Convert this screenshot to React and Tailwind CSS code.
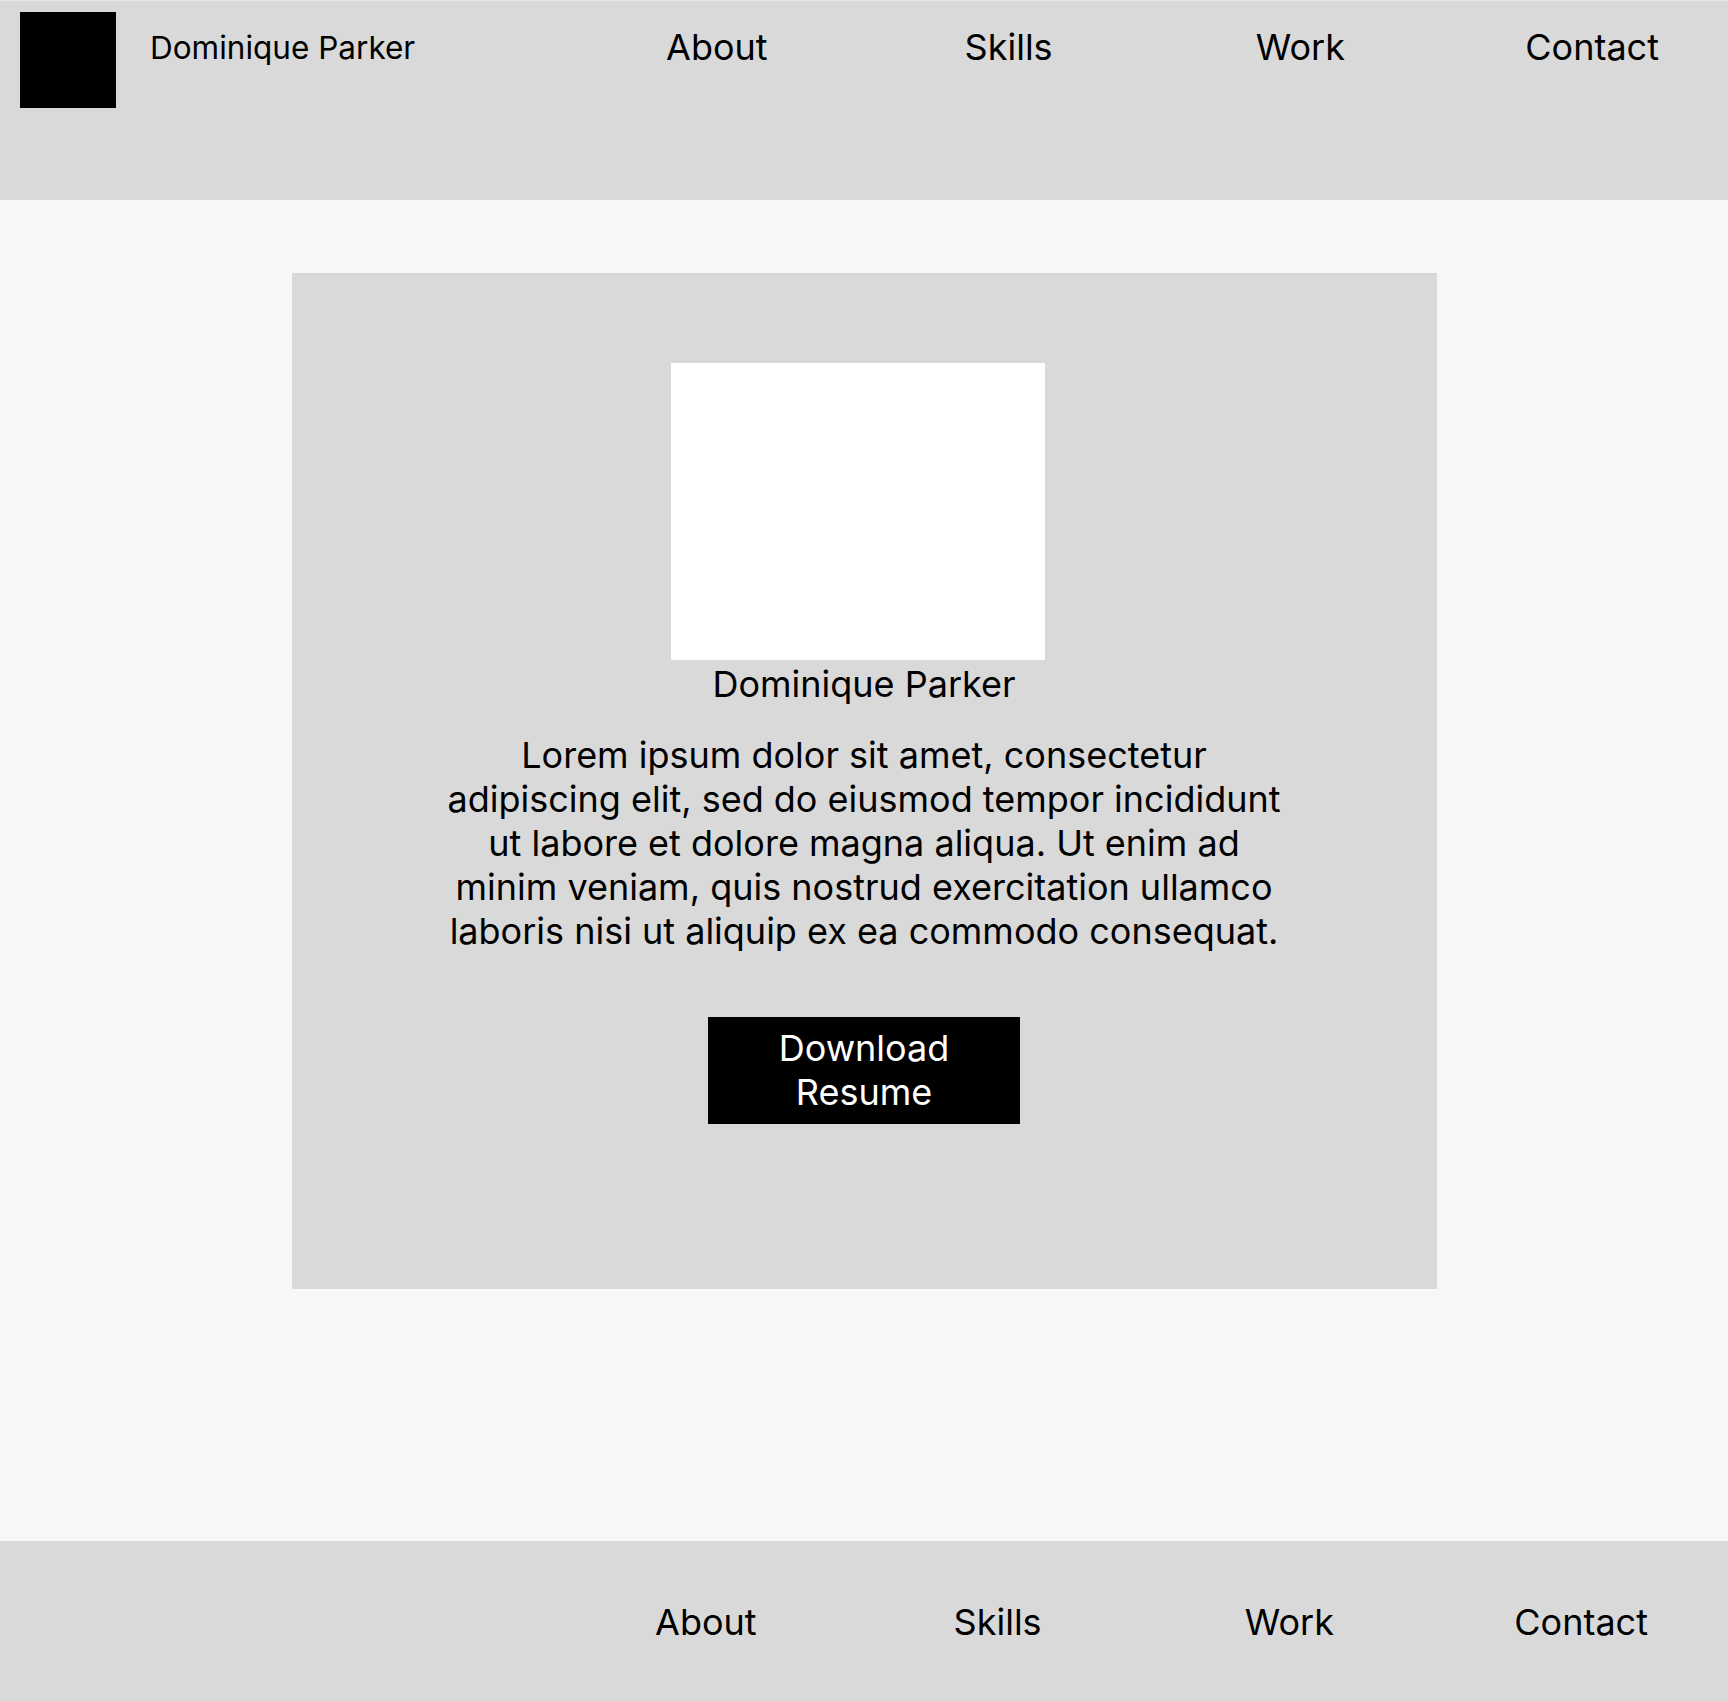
import React from 'react'

const links = ['About', 'Skills', 'Work', 'Contact']

const NavLinks = ({ className }) => (
  <nav className={`grid grid-cols-4 w-[1167px] shrink-0 ${className}`}>
    {links.map((l) => (
      <a key={l} href={`#${l.toLowerCase()}`} className="text-center text-[36px] leading-[1.21] text-black">
        {l}
      </a>
    ))}
  </nav>
)

const App = () => {
  return (
    <div className="min-h-[1701px] bg-[#f8f7f8] text-black" style={{ fontFamily: 'Inter, "Noto Sans", sans-serif' }}>
      {/* header */}
      <header className="flex h-[200px] bg-[#d9d9d9] border-t border-[#e6e6e6] overflow-hidden">
        <div className="flex w-[571px] shrink-0">
          <div className="mt-[11px] ml-[20px] w-[96px] h-[96px] bg-black shrink-0" />
          <span className="ml-[34px] mt-[28px] text-[31.5px] leading-[1.21] whitespace-nowrap">Dominique Parker</span>
        </div>
        <NavLinks className="mt-[25px]" />
      </header>

      {/* hero */}
      <main className="pt-[73px] pb-[252px]">
        <section className="mx-auto w-[1145px] h-[1016px] bg-[#d9d9d9] pt-[90px] flex flex-col items-center">
          <div className="w-[374px] h-[297px] bg-white mr-[13px]" />
          <h1 className="mt-[3px] text-[36px] leading-[1.21]">Dominique Parker</h1>
          <p className="mt-[26px] text-[36px] leading-[44px] text-center whitespace-nowrap">
            Lorem ipsum dolor sit amet, consectetur<br />
            adipiscing elit, sed do eiusmod tempor incididunt<br />
            ut labore et dolore magna aliqua. Ut enim ad<br />
            minim veniam, quis nostrud exercitation ullamco<br />
            laboris nisi ut aliquip ex ea commodo consequat.
          </p>
          <button className="mt-[64px] w-[312px] h-[107px] bg-black text-white text-[36px] leading-[44px] flex items-center justify-center text-center">
            Download<br />Resume
          </button>
        </section>
      </main>

      {/* footer */}
      <footer className="flex h-[160px] bg-[#d9d9d9] overflow-hidden pl-[560px] pt-[60px]">
        <NavLinks />
      </footer>
    </div>
  )
}

export default App
